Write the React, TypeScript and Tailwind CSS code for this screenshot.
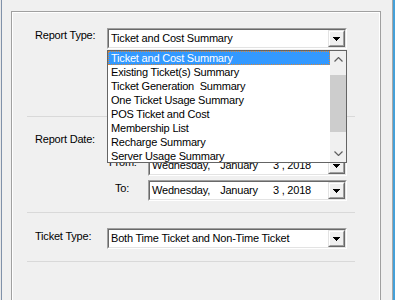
import React from 'react';

const reportTypes = [
  'Ticket and Cost Summary',
  'Existing Ticket(s) Summary',
  'Ticket Generation  Summary',
  'One Ticket Usage Summary',
  'POS Ticket and Cost',
  'Membership List',
  'Recharge Summary',
  'Server Usage Summary',
];

function DownArrow() {
  return (
    <svg width="7" height="4" viewBox="0 0 7 4" shapeRendering="crispEdges">
      <rect x="0" y="0" width="7" height="1" fill="#000" />
      <rect x="1" y="1" width="5" height="1" fill="#000" />
      <rect x="2" y="2" width="3" height="1" fill="#000" />
      <rect x="3" y="3" width="1" height="1" fill="#000" />
    </svg>
  );
}

function DropButton() {
  return (
    <div className="w-[17px] h-full border border-t-[#e3e3e3] border-l-[#e3e3e3] border-b-[#696969] border-r-[#696969]">
      <div className="w-full h-full border border-t-white border-l-white border-b-[#a0a0a0] border-r-[#a0a0a0] bg-[#f0f0f0] flex items-center justify-center">
        <DownArrow />
      </div>
    </div>
  );
}

// sunken 3d field with a drop button on the right
function Field({ width, children }: { width: string; children: React.ReactNode }) {
  return (
    <div className={`${width} h-[21px] border border-t-[#a0a0a0] border-l-[#a0a0a0] border-b-white border-r-white`}>
      <div className="w-full h-full border border-t-[#696969] border-l-[#696969] border-b-[#e3e3e3] border-r-[#e3e3e3] bg-white flex items-center">
        <div className="flex-1 pl-[2px] whitespace-pre leading-[13px]">{children}</div>
        <DropButton />
      </div>
    </div>
  );
}

function Chevron({ up }: { up?: boolean }) {
  return (
    <svg width="9" height="5" viewBox="0 0 9 5">
      <polyline
        points={up ? '0.5,4.5 4.5,0.5 8.5,4.5' : '0.5,0.5 4.5,4.5 8.5,0.5'}
        fill="none"
        stroke="#606060"
        strokeWidth="1.2"
      />
    </svg>
  );
}

function DropList() {
  return (
    <div className="absolute left-0 top-[22px] w-[240px] h-[113px] border border-[#646464] bg-white flex z-10">
      <div className="flex-1 overflow-hidden">
        {reportTypes.map((t, i) => (
          <div
            key={t}
            className={
              i === 0
                ? 'h-[14px] pl-[2px] bg-[#3399ff] text-white border border-dotted border-[#d9873a] leading-[12px] whitespace-pre'
                : 'h-[14px] pl-[3px] leading-[14px] whitespace-pre'
            }
          >
            {t}
          </div>
        ))}
      </div>
      <div className="w-[16px] bg-[#f0f0f0] flex flex-col">
        <div className="h-[17px] flex items-center justify-center">
          <Chevron up />
        </div>
        <div className="flex-1 pt-[7px]">
          <div className="h-[57px] bg-[#cdcdcd]" />
        </div>
        <div className="h-[17px] flex items-center justify-center">
          <Chevron />
        </div>
      </div>
    </div>
  );
}

function DateText() {
  return (
    <span>
      <span>Wednesday,</span>
      <span className="ml-[10px]">January</span>
      <span className="ml-[15px]">3 , 2018</span>
    </span>
  );
}

export default function App() {
  return (
    <div className="w-[395px] h-[300px] bg-[#f0f0f0] flex overflow-hidden text-[11px] tracking-[-0.2px] text-black font-['Liberation_Sans',Arial,sans-serif]">
      <div className="w-px bg-[#e8e8e8]" />
      <div className="w-px bg-[#8092aa]" />

      <div className="w-[390px] pl-[9px] pt-[11px]">
        <div className="w-[370px] h-[320px] border border-[#a0a0a0]">
          <div className="h-full border border-white pl-[14px]">
            {/* report type */}
            <div className="flex mt-[15px]">
              <div className="w-[80px] pl-[8px] pt-[1px] leading-[13px]">Report Type:</div>
              <div className="relative">
                <Field width="w-[240px]">Ticket and Cost Summary</Field>
                <DropList />
              </div>
            </div>

            <div className="mt-[67px] w-[328px] h-px bg-[#d9d9d9]" />

            {/* report date */}
            <div className="mt-[16px] pl-[8px] leading-[13px]">Report Date:</div>
            <div className="flex mt-[9px]">
              <div className="w-[121px] pl-[82px] pt-[1px] leading-[13px]">From:</div>
              <Field width="w-[199px]">
                <DateText />
              </Field>
            </div>
            <div className="flex mt-[4px]">
              <div className="w-[121px] pl-[88px] pt-[2px] leading-[13px]">To:</div>
              <Field width="w-[199px]">
                <DateText />
              </Field>
            </div>

            <div className="mt-[11px] w-[328px] h-px bg-[#d9d9d9]" />

            {/* ticket type */}
            <div className="flex mt-[15px]">
              <div className="w-[80px] pl-[8px] pt-[2px] leading-[13px]">Ticket Type:</div>
              <Field width="w-[240px]">Both Time Ticket and Non-Time Ticket</Field>
            </div>

            <div className="mt-[12px] w-[328px] h-px bg-[#d9d9d9]" />
          </div>
        </div>
      </div>

      <div className="w-px bg-[#a8a8a8]" />
      <div className="w-[2px] bg-[#45a0d8]" />
    </div>
  );
}
